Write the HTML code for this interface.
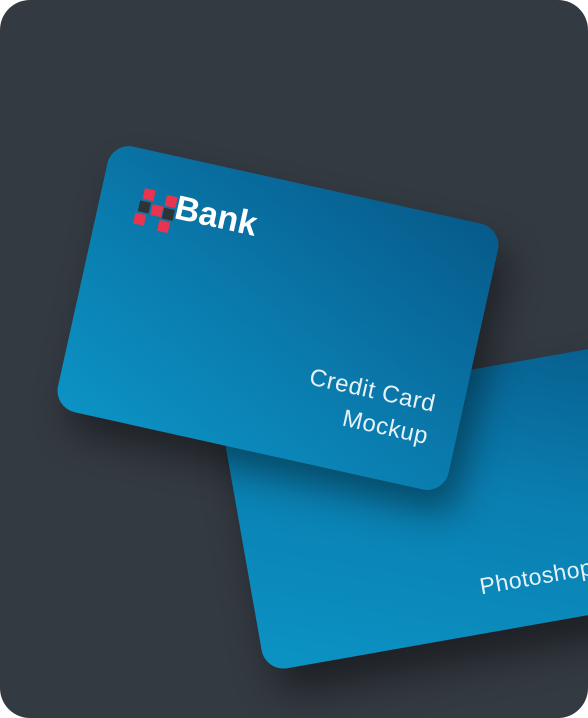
<!DOCTYPE html>
<html><head><style>
html,body{margin:0;padding:0;background:#fff;}
.bg{position:relative;width:588px;height:718px;background:#343a42;border-radius:30px;overflow:hidden;}
.card{position:absolute;border-radius:22px;}
.back{left:220px;top:414px;width:430px;height:262px;transform-origin:0 0;transform:rotate(-10deg);
background:linear-gradient(200deg,#075d8c 0%,#0a7eb0 45%,#0b93c4 100%);
box-shadow:10px 25px 40px rgba(0,0,0,0.45);}
.front{left:78px;top:182px;width:400px;height:272px;transform:rotate(12.5deg);
background:linear-gradient(205deg,#065a8a 0%,#0a78aa 50%,#0c93c5 100%);
box-shadow:15px 20px 35px rgba(0,0,0,0.4);}
.t{position:absolute;color:#e6f2f8;font-family:"Liberation Sans",sans-serif;font-size:22px;letter-spacing:0.5px;white-space:nowrap;}
.sq{position:absolute;width:11px;height:11px;}
.r{background:#e8344e}.d{background:#2e3336}
</style></head><body>
<div class="bg">
<div class="card back"><div class="t" style="left:226px;top:202px;font-size:23px;">Photoshop</div></div>
<div class="card front">
 <div style="position:absolute;left:38px;top:38px;width:40px;height:40px;">
  <div class="sq r" style="left:4px;top:0"></div>
  <div class="sq r" style="left:27px;top:2px"></div>
  <div class="sq d" style="left:2px;top:13px"></div>
  <div class="sq r" style="left:15px;top:14px"></div>
  <div class="sq d" style="left:27px;top:15px"></div>
  <div class="sq r" style="left:0;top:26px"></div>
  <div class="sq r" style="left:25px;top:28px"></div>
 </div>
 <div class="t" style="left:76px;top:31px;font-size:34px;font-weight:bold;color:#fff;letter-spacing:0;">Bank</div>
 <div class="t" style="right:28px;top:170px;text-align:right;line-height:33px;font-size:24px;">Credit Card<br>Mockup</div>
</div>
</div>
</body></html>
